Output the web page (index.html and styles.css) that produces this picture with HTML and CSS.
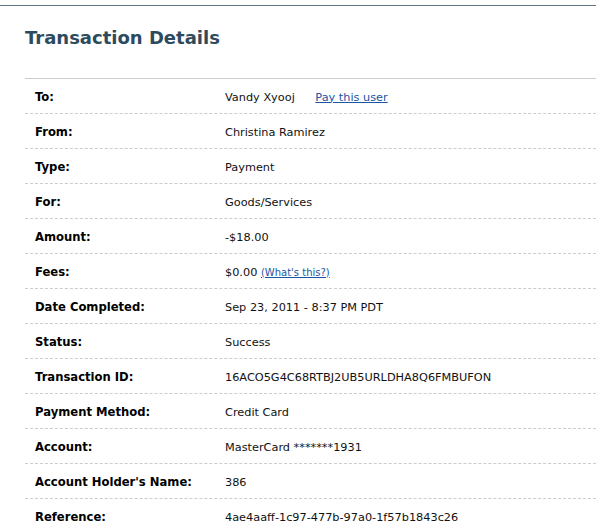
FILE: index.html
```html
<!DOCTYPE html>
<html>
<head>
<meta charset="utf-8">
<link rel="stylesheet" href="styles.css">
</head>
<body>
<div class="page">
  <h1 class="title">Transaction Details</h1>
  <div class="details">
    <div class="row"><div class="label">To:</div><div class="value">Vandy Xyooj <a class="link pay" href="#">Pay this user</a></div></div>
    <div class="row"><div class="label">From:</div><div class="value">Christina Ramirez</div></div>
    <div class="row"><div class="label">Type:</div><div class="value">Payment</div></div>
    <div class="row"><div class="label">For:</div><div class="value">Goods/Services</div></div>
    <div class="row"><div class="label">Amount:</div><div class="value">-$18.00</div></div>
    <div class="row"><div class="label">Fees:</div><div class="value">$0.00 <a class="link small" href="#">(What's this?)</a></div></div>
    <div class="row"><div class="label">Date Completed:</div><div class="value">Sep 23, 2011 - 8:37 PM PDT</div></div>
    <div class="row"><div class="label">Status:</div><div class="value">Success</div></div>
    <div class="row"><div class="label">Transaction ID:</div><div class="value">16ACO5G4C68RTBJ2UB5URLDHA8Q6FMBUFON</div></div>
    <div class="row"><div class="label">Payment Method:</div><div class="value">Credit Card</div></div>
    <div class="row"><div class="label">Account:</div><div class="value">MasterCard *******1931</div></div>
    <div class="row"><div class="label">Account Holder's Name:</div><div class="value">386</div></div>
    <div class="row"><div class="label">Reference:</div><div class="value">4ae4aaff-1c97-477b-97a0-1f57b1843c26</div></div>
  </div>
</div>
</body>
</html>
```
FILE: styles.css
```css
html, body {
  margin: 0;
  padding: 0;
  background: #fff;
}
body {
  font-family: "DejaVu Sans", Verdana, sans-serif;
  color: #111;
  overflow: hidden;
}
.page {
  margin-top: 5px;
  border-top: 1px solid #5f7582;
  padding-left: 25px;
}
.title {
  margin: 0;
  padding-top: 21px;
  height: 72px;
  box-sizing: border-box;
  font-size: 18px;
  font-weight: bold;
  color: #2e4a5d;
  line-height: 22px;
}
.details {
  border-top: 1px solid #cccccc;
}
.row {
  display: flex;
  align-items: center;
  height: 32px;
  padding-top: 2px;
  border-bottom: 1px dashed #cccccc;
}
.label {
  width: 190px;
  padding-left: 10px;
  font-weight: bold;
  font-size: 11.6px;
  color: #000;
}
.value {
  font-size: 11.3px;
  color: #111;
}
.link {
  color: #1c55a3;
  text-decoration: underline;
}
.pay {
  margin-left: 17px;
}
.small {
  font-size: 10px;
}
```
